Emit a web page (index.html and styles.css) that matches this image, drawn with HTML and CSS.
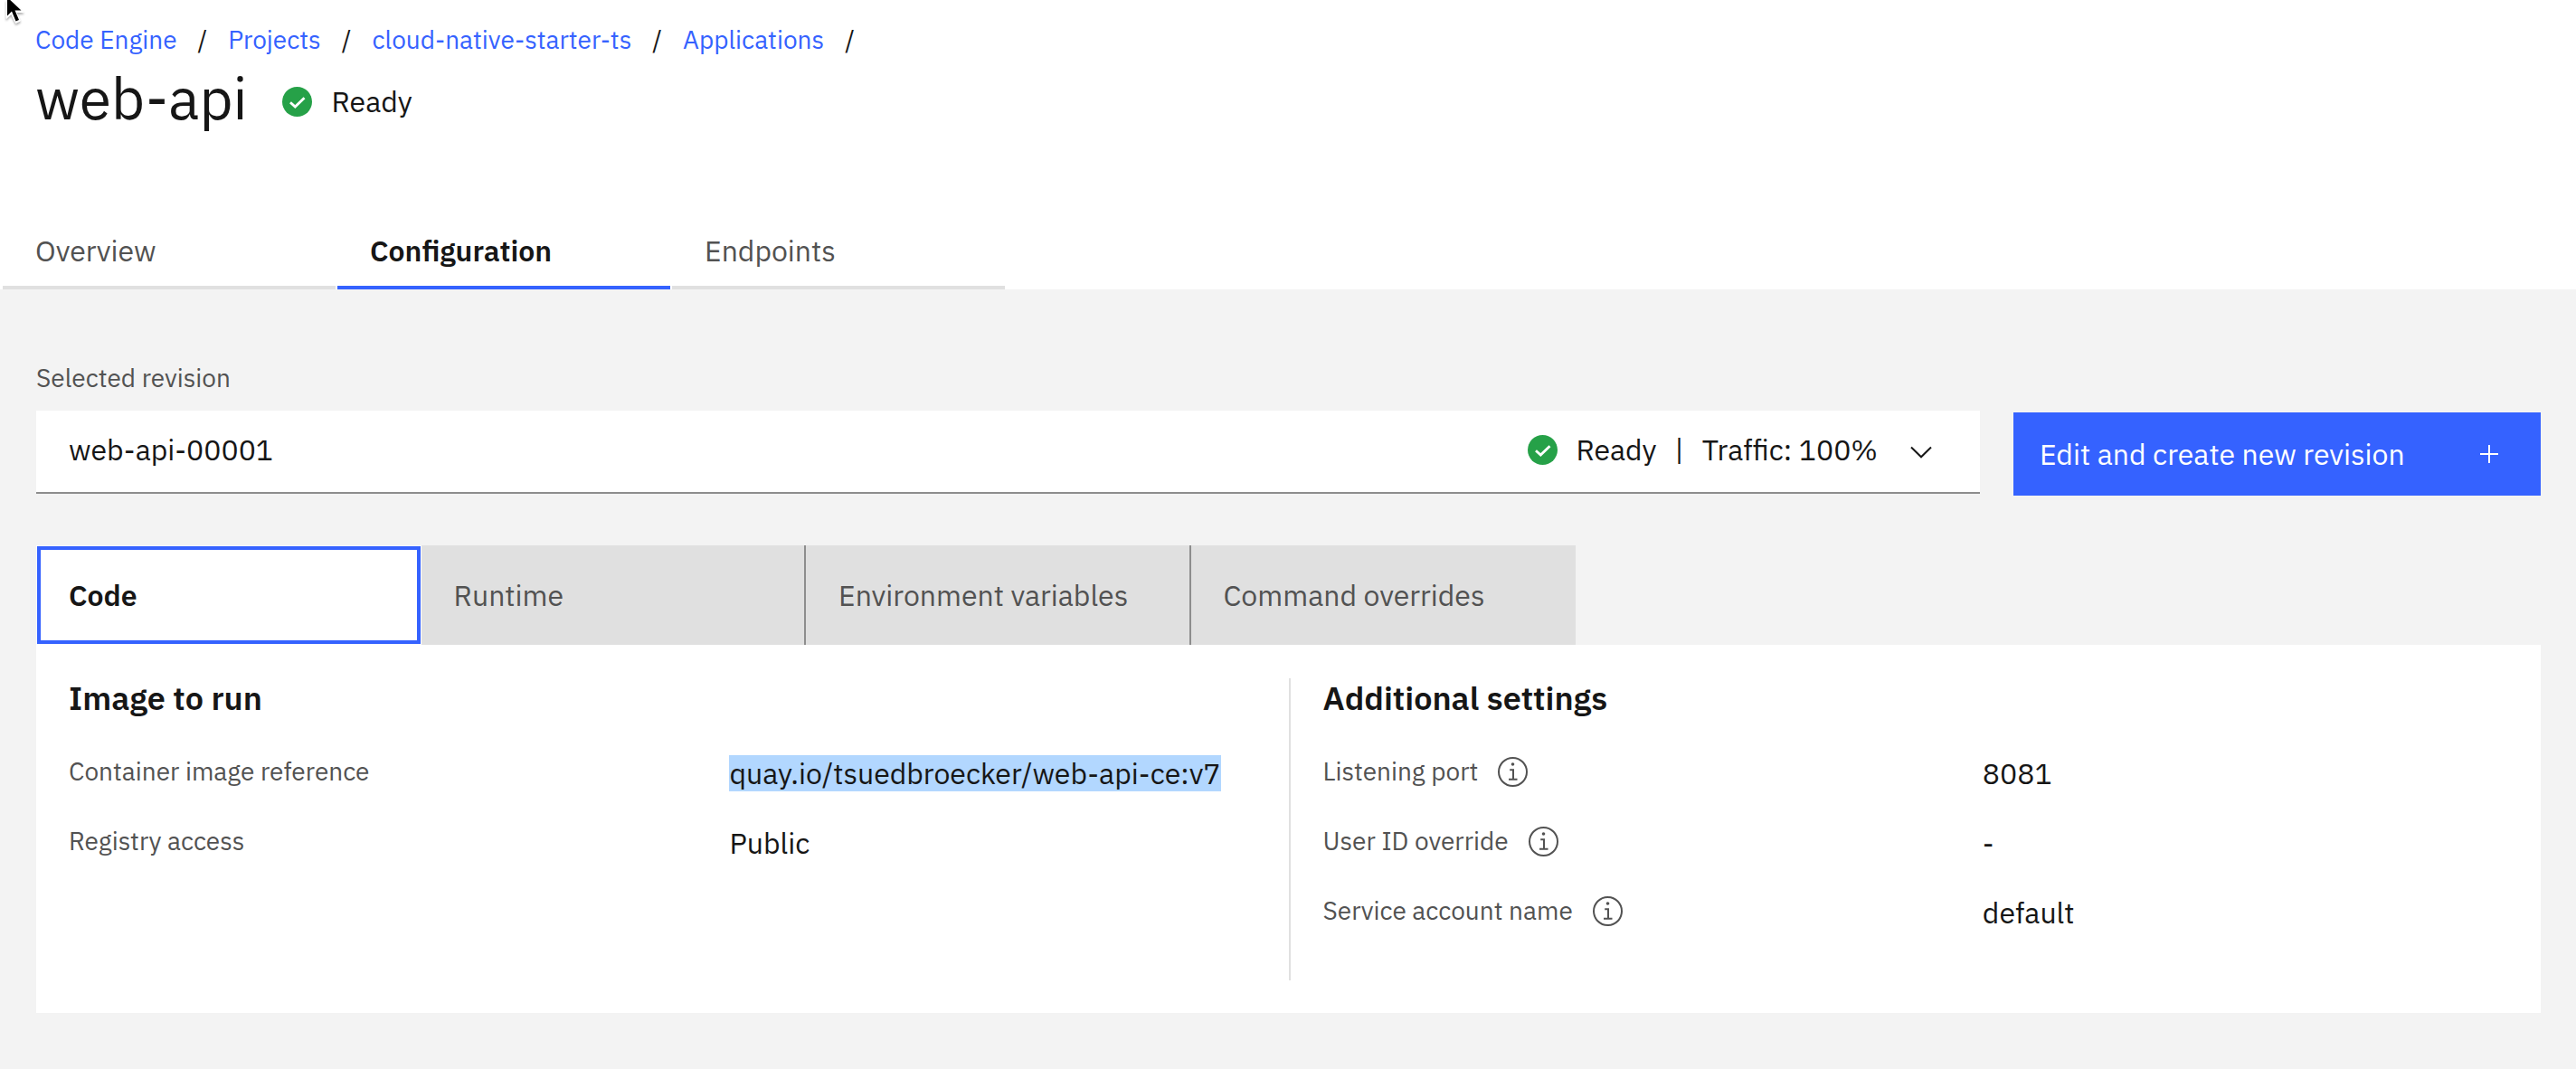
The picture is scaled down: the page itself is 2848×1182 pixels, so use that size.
FILE: index.html
```html
<!DOCTYPE html>
<html lang="en">
<head>
<meta charset="utf-8">
<meta name="viewport" content="width=device-width, initial-scale=1">
<title>web-api – Code Engine</title>
<link rel="stylesheet" href="styles.css">
</head>
<body>
<svg class="sprite" aria-hidden="true">
  <symbol id="icon-check" viewBox="0 0 33 33">
    <circle cx="16.500" cy="16.500" r="16.500" fill="#26a148"/>
    <path d="M9 17.200 14.300 22 24.500 12.200" fill="none" stroke="#fff" stroke-width="2.800"/>
  </symbol>
  <symbol id="icon-info" viewBox="0 0 33 33">
    <circle cx="16.500" cy="16.500" r="15.500" fill="none" stroke="currentColor" stroke-width="2"/>
    <circle cx="16.500" cy="8" r="1.800" fill="currentColor"/>
    <path d="M13.200 14.200H17V24.800M12 24.800h9.500" fill="none" stroke="currentColor" stroke-width="2"/>
  </symbol>
</svg>

<header class="page-header">
  <nav aria-label="Breadcrumb">
    <ol class="breadcrumb">
      <li><a href="#">Code Engine</a></li>
      <li><a href="#">Projects</a></li>
      <li><a href="#">cloud-native-starter-ts</a></li>
      <li><a href="#">Applications</a></li>
    </ol>
  </nav>
  <div class="title-row">
    <h1>web-api</h1>
    <div class="status">
      <svg class="icon" aria-hidden="true"><use href="#icon-check"/></svg>
      <span>Ready</span>
    </div>
  </div>
  <div class="line-tabs" role="tablist">
    <button type="button" role="tab" aria-selected="false">Overview</button>
    <button type="button" role="tab" aria-selected="true">Configuration</button>
    <button type="button" role="tab" aria-selected="false">Endpoints</button>
  </div>
</header>

<main class="content">
  <label class="field-label" for="revision">Selected revision</label>
  <div class="revision-row">
    <div class="dropdown">
      <select id="revision">
        <option>web-api-00001</option>
      </select>
      <div class="dropdown-status">
        <svg class="icon" aria-hidden="true"><use href="#icon-check"/></svg>
        <span>Ready</span>
        <span>|</span>
        <span>Traffic: 100%</span>
        <svg class="chevron" viewBox="0 -6 24 20" aria-hidden="true"><path d="M1 1.500 12 12.300 23 1.500"/></svg>
      </div>
    </div>
    <button class="primary" type="button">
      <span>Edit and create new revision</span>
      <svg class="plus" viewBox="0 0 20 20" aria-hidden="true"><path d="M10 0V20M0 10H20"/></svg>
    </button>
  </div>

  <div class="box-tabs" role="tablist">
    <button type="button" role="tab" aria-selected="true">Code</button>
    <button type="button" role="tab" aria-selected="false">Runtime</button>
    <button type="button" role="tab" aria-selected="false">Environment variables</button>
    <button type="button" role="tab" aria-selected="false">Command overrides</button>
  </div>

  <div class="panel" role="tabpanel">
    <section>
      <h2>Image to run</h2>
      <dl>
        <div><dt>Container image reference</dt><dd><mark>quay.io/tsuedbroecker/web-api-ce:v7</mark></dd></div>
        <div><dt>Registry access</dt><dd>Public</dd></div>
      </dl>
    </section>
    <section>
      <h2>Additional settings</h2>
      <dl>
        <div>
          <dt>Listening port <button class="info" type="button" aria-label="About listening port"><svg class="icon" aria-hidden="true"><use href="#icon-info"/></svg></button></dt>
          <dd>8081</dd>
        </div>
        <div>
          <dt>User ID override <button class="info" type="button" aria-label="About user ID override"><svg class="icon" aria-hidden="true"><use href="#icon-info"/></svg></button></dt>
          <dd>-</dd>
        </div>
        <div>
          <dt>Service account name <button class="info" type="button" aria-label="About service account name"><svg class="icon" aria-hidden="true"><use href="#icon-info"/></svg></button></dt>
          <dd>default</dd>
        </div>
      </dl>
    </section>
  </div>
</main>

<svg class="pointer" viewBox="0 0 28 32" aria-hidden="true">
  <path d="M7-6V20.500L12.500 15.500 17.500 25.500 22.500 23 18 13.500H26Z" fill="#fff" stroke="#fff" stroke-linejoin="round"/>
  <path d="M8-3V17.500L13 12.500 17.500 23.500 21 22 16.500 11.500H23.500Z" fill="#000"/>
</svg>
</body>
</html>
```
FILE: styles.css
```css
* {
  box-sizing: border-box;
  margin: 0;
  padding: 0;
}

body {
  background: #f3f3f3;
  color: #161616;
  font: 32px/40px "IBM Plex Sans", "Open Sans", sans-serif;
}

button,
select {
  border: 0;
  background: none;
  color: inherit;
  font: inherit;
  text-align: left;
}

.sprite {
  display: none;
}

.icon {
  display: block;
  flex: none;
  width: 33px;
  height: 33px;
}

/* Header */

.page-header {
  padding-top: 26px;
  background: #fff;
}

.breadcrumb {
  display: flex;
  flex-wrap: wrap;
  gap: 23px;
  padding: 0 39px;
  font-size: 28px;
  line-height: 36px;
  list-style: none;
}

.breadcrumb li::after {
  content: "/";
  margin-left: 23px;
}

.breadcrumb a {
  color: #3562ff;
  text-decoration: none;
}

.title-row {
  display: flex;
  align-items: center;
  gap: 38px;
  margin-top: 10px;
  padding: 0 39px;
}

h1 {
  font-size: 64px;
  font-weight: 400;
  line-height: 72px;
}

.status {
  display: flex;
  align-items: center;
  gap: 22px;
  padding-top: 8px;
}

.line-tabs {
  display: flex;
  gap: 2px;
  margin-top: 92px;
  padding-left: 3px;
}

.line-tabs button {
  width: 368px;
  height: 84px;
  padding: 2px 0 0 36px;
  border-bottom: 4px solid #e0e0e0;
  color: #525252;
}

.line-tabs [aria-selected="true"] {
  border-color: #3562ff;
  color: #161616;
  font-weight: 600;
}

/* Revision picker */

.content {
  padding: 80px 39px 62px 40px;
}

.field-label {
  display: block;
  color: #525252;
  font-size: 28px;
  line-height: 36px;
}

.revision-row {
  display: flex;
  gap: 37px;
  margin-top: 18px;
}

.dropdown {
  position: relative;
  flex: 1;
  height: 92px;
  border-bottom: 2px solid #8d8d8d;
  background: #fff;
}

.dropdown select {
  width: 100%;
  height: 100%;
  padding: 0 36px 4px;
  appearance: none;
}

/* The status sits over the right end of the select and lets clicks through. */
.dropdown-status {
  position: absolute;
  inset: 0 53px 4px auto;
  display: flex;
  align-items: center;
  gap: 20px;
  pointer-events: none;
}

.chevron {
  width: 24px;
  height: 20px;
  margin-left: 16px;
}

.chevron path,
.plus path {
  fill: none;
  stroke: currentColor;
  stroke-width: 2;
}

.primary {
  display: flex;
  flex: 0 0 583px;
  align-items: center;
  justify-content: space-between;
  height: 92px;
  margin-top: 2px;
  padding: 0 47px 0 29px;
  background: #3562ff;
  color: #fff;
}

.plus {
  width: 20px;
  height: 20px;
}

/* Configuration sections */

.box-tabs {
  display: grid;
  grid-template-columns: repeat(4, 1fr);
  max-width: 1702px;
  margin-top: 55px;
}

.box-tabs button {
  height: 110px;
  padding-left: 36px;
  border-right: 2px solid #8d8d8d;
  background: #e0e0e0;
  color: #525252;
}

.box-tabs button:last-child {
  border-right: 0;
}

.box-tabs [aria-selected="true"] {
  border-right: 0;
  outline: 4px solid #3562ff;
  outline-offset: -5px;
  background: #fff;
  color: #161616;
  font-weight: 600;
}

.panel {
  display: grid;
  grid-template-columns: 1fr 1fr;
  padding: 37px 0 36px;
  background: #fff;
}

.panel section {
  padding: 0 0 55px 36px;
}

.panel section + section {
  border-left: 2px solid #e0e0e0;
}

h2 {
  font-size: 36px;
  font-weight: 600;
  line-height: 44px;
}

dl {
  display: grid;
  gap: 37px;
  margin-top: 41px;
}

dl div {
  display: grid;
  grid-template-columns: 13fr 11fr;
  align-items: start;
}

dt {
  display: flex;
  align-items: center;
  gap: 22px;
  color: #525252;
  font-size: 28px;
  line-height: 36px;
}

mark {
  display: inline-block;
  background: #b2d7ff;
  color: inherit;
}

.pointer {
  position: absolute;
  top: 0;
  left: 0;
  width: 28px;
  height: 32px;
  filter: drop-shadow(0 2px 1px rgba(0, 0, 0, 0.3));
}
```
